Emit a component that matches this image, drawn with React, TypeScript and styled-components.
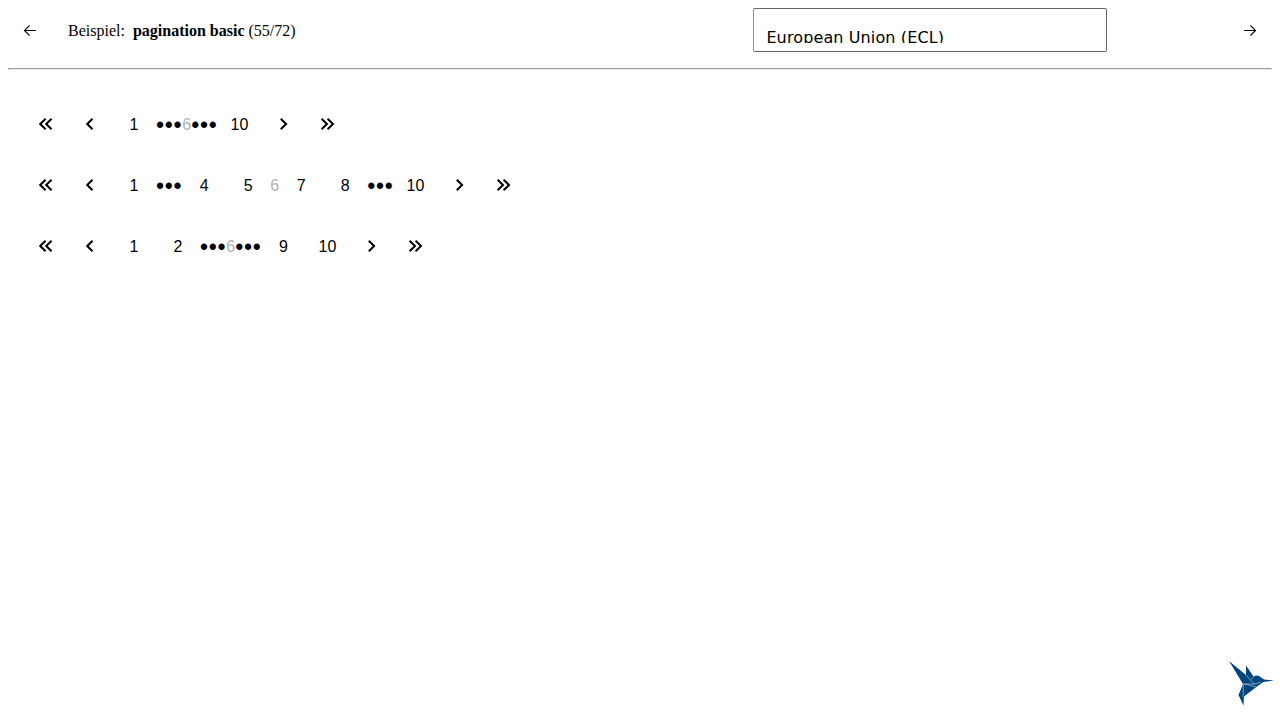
import React from "react";
import styled, { createGlobalStyle } from "styled-components";

const GlobalStyle = createGlobalStyle`
  body { margin: 8px; background: #fff; color: #000; font: 16px "Liberation Serif", "Times New Roman", serif; }
`;

const Header = styled.header`
  display: flex;
  align-items: center;
  height: 44px;
`;

const NavButton = styled.button`
  display: flex;
  align-items: center;
  justify-content: center;
  width: 44px;
  height: 44px;
  padding: 0;
  border: 0;
  background: none;
  color: #000;
`;

const Title = styled.div`
  width: 685.4px;
  margin-left: 16px;
  padding-top: 2px;
  white-space: pre;
`;

const ThemeSelect = styled.div`
  box-sizing: border-box;
  width: 353.6px;
  height: 44px;
  padding: 8px 12px;
  border: 1px solid #636363;
  border-left-color: #919191;
  border-radius: 2px;
`;

const ThemeName = styled.div`
  height: 26px;
  overflow: hidden;
  padding-top: 11px;
  box-sizing: border-box;
  font: 16px/20px "DejaVu Sans", Verdana, sans-serif;
  letter-spacing: 0.12px;
`;

const NextSlot = styled.div`
  margin-left: auto;
`;

const Divider = styled.hr`
  margin: 16px 0 0;
  border: 1px solid #9a9a9a;
  border-bottom-color: #ededed;
  border-right-color: #ededed;
`;

const Main = styled.main`
  display: flex;
  flex-direction: column;
  gap: 17px;
  padding: 32px 16px;
  font-family: "Liberation Sans", Arial, sans-serif;
`;

const Pager = styled.nav`
  display: flex;
  align-items: center;
  height: 44px;
`;

const PageButton = styled(NavButton)`
  padding-top: 2px;
  font: 16px "Liberation Sans", Arial, sans-serif;
`;

const Current = styled.span`
  padding-top: 2px;
  color: #b2b2b2;
`;

const Ellipsis = styled.span`
  font-size: 23px;
  line-height: 47px;
  height: 44px;
  letter-spacing: 0.7px;
`;

const Logo = styled.svg`
  position: fixed;
  right: 6px;
  bottom: 14px;
  width: 46px;
  height: 46px;
`;

const Arrow = ({ flip = false }: { flip?: boolean }) => (
  <svg width="14" height="14" viewBox="0 0 14 14" fill="none" stroke="currentColor" strokeWidth="1.1" transform={flip ? "scale(-1 1)" : undefined}>
    <path d="M13 7.5H1.8M6.5 2.5L1.5 7.5L6.5 12.5" />
  </svg>
);

const chevrons = {
  first: "M7.6 2.7L2.2 8L7.6 13.3M13.6 2.7L8.2 8L13.6 13.3",
  prev: "M10.5 2.7L5.2 8L10.5 13.3",
  next: "M5.8 2.7L11.1 8L5.8 13.3",
  last: "M2.6 2.7L8 8L2.6 13.3M8.6 2.7L14 8L8.6 13.3",
};

const Step = ({ kind }: { kind: keyof typeof chevrons }) => (
  <NavButton aria-label={kind}>
    <svg width="16" height="16" viewBox="0 0 16 16" fill="none" stroke="currentColor" strokeWidth="2">
      <path d={chevrons[kind]} />
    </svg>
  </NavButton>
);

const current = 6;
const rows: (number | "gap")[][] = [
  [1, "gap", 6, "gap", 10],
  [1, "gap", 4, 5, 6, 7, 8, "gap", 10],
  [1, 2, "gap", 6, "gap", 9, 10],
];

export default function App() {
  return (
    <>
      <GlobalStyle />
      <Header>
        <NavButton aria-label="back"><Arrow /></NavButton>
        <Title>Beispiel:{"  "}<b>pagination basic</b> (55/72)</Title>
        <ThemeSelect><ThemeName>European Union (ECL)</ThemeName></ThemeSelect>
        <NextSlot><NavButton aria-label="forward"><Arrow flip /></NavButton></NextSlot>
      </Header>
      <Divider />
      <Main>
        {rows.map((items, row) => (
          <Pager key={row}>
            <Step kind="first" />
            <Step kind="prev" />
            {items.map((item, i) =>
              item === "gap" ? <Ellipsis key={i}>•••</Ellipsis>
                : item === current ? <Current key={i}>{item}</Current>
                : <PageButton key={i}>{item}</PageButton>
            )}
            <Step kind="next" />
            <Step kind="last" />
          </Pager>
        ))}
      </Main>
      <Logo viewBox="0 0 46 46" fill="#00457c">
        <path d="M1 1L18 15L18 5.5L25.5 16.5Q29 14.5 32.5 17L36 19.5L46 20.5L35.5 22L31 25L16 36.5L15.5 45.5L10.5 35L15 24Z" />
        <path d="M15 24H27L33 22M15.2 24V37M16 23.8L28.5 27M18 15L24.5 22.5L27 24M22.5 20L26 16.5" fill="none" stroke="#b5cede" strokeWidth=".65" />
      </Logo>
    </>
  );
}
